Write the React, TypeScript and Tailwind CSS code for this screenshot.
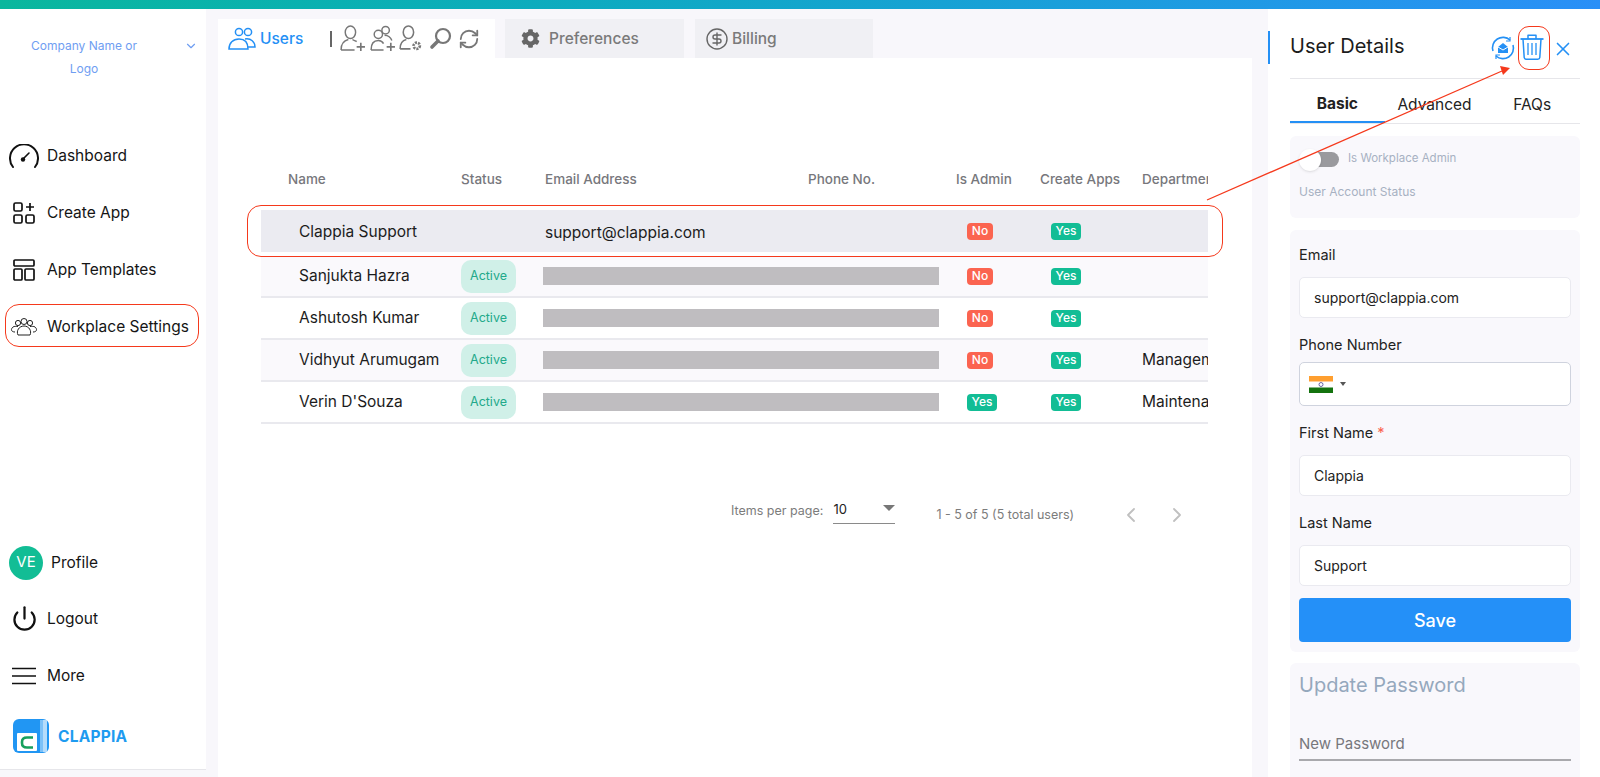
import React from 'react';
import { ChevronDown, ChevronLeft, ChevronRight, Power, RefreshCw, X, CircleDollarSign } from 'lucide-react';
import { FaCog } from 'react-icons/fa';

interface UserRow {
    name: string;
    active: boolean;
    email?: string;
    admin: boolean;
    department?: string;
    tinted?: boolean;
    selected?: boolean;
}

const users: UserRow[] = [
    { name: 'Clappia Support', active: false, email: 'support@clappia.com', admin: false, selected: true },
    { name: 'Sanjukta Hazra', active: true, admin: false, tinted: true },
    { name: 'Ashutosh Kumar', active: true, admin: false },
    { name: 'Vidhyut Arumugam', active: true, admin: false, department: 'Management', tinted: true },
    { name: "Verin D'Souza", active: true, admin: true, department: 'Maintenance' },
];

const GaugeIcon = () => (
    <svg width="30" height="24" viewBox="0 0 30 24" fill="none" stroke="#111" strokeWidth="2" strokeLinecap="round">
        <path d="M4 23 A14 14 0 1 1 26 23" />
        <path d="M14 15 L20 9" strokeWidth="1.6" />
        <circle cx="14" cy="15.5" r="2.2" fill="#111" stroke="none" />
    </svg>
);

const CreateAppIcon = () => (
    <svg width="22" height="22" viewBox="0 0 22 22" fill="none" stroke="#111" strokeWidth="1.7">
        <rect x="1" y="1" width="8" height="8" rx="1.5" />
        <rect x="1" y="13" width="8" height="8" rx="1.5" />
        <rect x="13" y="13" width="8" height="8" rx="1.5" />
        <path d="M17 1v8M13 5h8" />
    </svg>
);

const TemplateIcon = () => (
    <svg width="22" height="22" viewBox="0 0 22 22" fill="none" stroke="#111" strokeWidth="1.7">
        <rect x="1" y="1" width="20" height="6" rx="1" />
        <rect x="1" y="10" width="8" height="11" rx="1" />
        <rect x="12" y="10" width="9" height="11" rx="1" />
    </svg>
);

const GroupIcon = () => (
    <svg width="28" height="20" viewBox="0 0 28 20" fill="none" stroke="#222" strokeWidth="1">
        <circle cx="8" cy="6" r="2.6" />
        <circle cx="14" cy="4.5" r="3" />
        <circle cx="20" cy="6" r="2.6" />
        <path d="M5 15 C1 15 0.5 12 3 10 C4.5 9 6 9.5 8 9.5" />
        <path d="M23 15 C27 15 27.5 12 25 10 C23.5 9 22 9.5 20 9.5" />
        <path d="M8 18 C6 14 9 9 14 9 C19 9 22 14 20 18 Z" />
    </svg>
);

const MenuLines = () => (
    <svg width="26" height="18" viewBox="0 0 26 18" stroke="#111" strokeWidth="1.6">
        <path d="M1 1.5h24M1 9h24M1 16.5h24" />
    </svg>
);

const UsersTabIcon = () => (
    <svg width="28" height="24" viewBox="0 0 28 24" fill="none" stroke="#2490f5" strokeWidth="1.5">
        <circle cx="11" cy="5" r="3.6" />
        <circle cx="20" cy="5" r="3.6" />
        <path d="M1 22 C1 16 5 12 11 12 C17 12 20 16 20 22 Z" fill="#fff" />
        <path d="M17 12 C23 11 27 15 27 20 L20 20" />
    </svg>
);

const UserPlus = ({ double }: { double?: boolean }) => (
    <svg width="27" height="27" viewBox="0 0 26 26" fill="none" stroke="#777" strokeWidth="1.4">
        {double ? (
            <>
                <circle cx="16" cy="5" r="3.6" />
                <circle cx="9" cy="9" r="4" />
                <path d="M2 24 C2 18 5 15 9 15 C11 15 13 16 14 18 M2 24 H14" />
                <path d="M15 10 C18 10 21 12 22 15" />
            </>
        ) : (
            <>
                <ellipse cx="11" cy="7" rx="5" ry="6" />
                <path d="M2 24 C2 18 5 15 9 14 M13 14 C14 15 16 15 17 16 M2 24 H15" />
            </>
        )}
        <path d="M21 17v8M17 21h8" strokeWidth="1.6" />
    </svg>
);

const UserGear = () => (
    <svg width="25" height="27" viewBox="0 0 24 26" fill="none" stroke="#777" strokeWidth="1.5">
        <ellipse cx="10" cy="7" rx="5" ry="6" />
        <path d="M2 23 C2 18 4 15 8 14 M2 23 H12" />
        <circle cx="18" cy="20" r="3" strokeWidth="2.6" strokeDasharray="2 1" />
    </svg>
);

const Magnifier = () => (
    <svg width="23" height="23" viewBox="0 0 23 23" fill="none" stroke="#777">
        <circle cx="14" cy="9" r="7" strokeWidth="2.2" />
        <path d="M9 14 L3 20" strokeWidth="3.6" strokeLinecap="round" />
    </svg>
);

const MailSync = () => (
    <svg width="24" height="24" viewBox="0 0 24 24" fill="none" stroke="#2490f5" strokeWidth="1.6">
        <path d="M2 15 A10.5 10.5 0 0 1 19 4" />
        <path d="M22 9 A10.5 10.5 0 0 1 5 20" />
        <path d="M19 1v4h-4M5 23v-4h4" strokeWidth="1.2" />
        <path d="M7 11 L12 7 L17 11 V17 H7 Z" fill="#2490f5" stroke="none" />
        <path d="M7 11 L12 14 L17 11" stroke="#fff" strokeWidth="1" />
    </svg>
);

const TrashIcon = () => (
    <svg width="24" height="26" viewBox="0 0 24 26" fill="none" stroke="#2490f5" strokeWidth="1.5" strokeLinejoin="round">
        <path d="M0.5 5h23" strokeWidth="1.8" />
        <path d="M8 5V1.2h8V5" />
        <path d="M3 5l1.2 18.5q0.2 1.7 2 1.7h11.6q1.8 0 2-1.7L21 5" />
        <path d="M8 9v12M12 9v12M16 9v12" strokeWidth="1.3" />
    </svg>
);

const ClappiaLogo = () => (
    <svg width="36" height="35" viewBox="0 0 36 35">
        <rect x="0" y="0" width="36" height="34" rx="6" fill="#2196f3" />
        <rect x="27" y="1" width="3" height="32" fill="#7cc1f8" />
        <rect x="30" y="1" width="4" height="32" fill="#b5dcfb" />
        <rect x="4" y="14" width="20" height="18" rx="1" fill="#fff" />
        <path d="M20 18.5h-6q-5 0-5 4.5v1q0 4.5 5 4.5h6" fill="none" stroke="#17a05d" strokeWidth="2.6" />
    </svg>
);

const IndiaFlag = () => (
    <svg width="24" height="17" viewBox="0 0 24 17">
        <rect width="24" height="6" fill="#ff9f2f" />
        <rect y="5.5" width="24" height="6" fill="#fff" />
        <rect y="11.5" width="24" height="5.5" fill="#14730f" />
        <circle cx="12" cy="8.5" r="2" fill="none" stroke="#5a5a9a" strokeWidth="0.9" />
    </svg>
);

const NavItem = ({ icon, label }: { icon: React.ReactNode; label: string }) => (
    <div className="flex h-[57px] items-center">
        <div className="flex w-[46px] justify-center">{icon}</div>
        <span className="text-[15.5px] text-[#151515]">{label}</span>
    </div>
);

const Badge = ({ yes }: { yes: boolean }) => (
    <span className={`flex h-[17px] items-center justify-center rounded-[4px] text-[12px] font-medium text-white ${yes ? 'w-[30px] bg-[#12bd95]' : 'w-[26px] bg-[#fb6450]'}`}>
        {yes ? 'Yes' : 'No'}
    </span>
);

const Row = ({ user }: { user: UserRow }) => {
    const bg = user.selected ? 'bg-[#ebebf1]' : user.tinted ? 'bg-[#faf9fc]' : 'bg-white';
    return (
        <div className={`flex items-center ${bg} ${user.selected ? 'mb-[4px] h-[42px]' : 'h-[42px] border-b-2 border-[#e9e9ee]'}`}>
            <div className={`w-[200px] pl-[38px] text-[15.5px] text-[#1c1c1c] ${user.selected ? 'pt-[2px]' : ''}`}>{user.name}</div>
            <div className="w-[84px]">
                {user.active && (
                    <span className="flex h-[33px] w-[55px] items-center justify-center rounded-[10px] bg-[#d0f0e8] text-[12.5px] text-[#22a98a]">
                        Active
                    </span>
                )}
            </div>
            <div className={`w-[422px] ${user.selected ? 'pt-[2px]' : ''}`}>
                {user.email ? (
                    <span className="text-[15.5px] text-[#1c1c1c]">{user.email}</span>
                ) : (
                    <div className="-ml-[2px] h-[18px] w-[396px] bg-[#bfbdc0]" />
                )}
            </div>
            <div className="w-[84px]">
                <Badge yes={user.admin} />
            </div>
            <div className="w-[91px]">
                <Badge yes />
            </div>
            <div className="flex-1 overflow-hidden whitespace-nowrap text-[15.5px] text-[#1c1c1c]">{user.department}</div>
        </div>
    );
};

const Field = ({ label, value, required }: { label: string; value: string; required?: boolean }) => (
    <div className="mb-[18px]">
        <div className="mb-[13px] h-[18px] text-[14.5px] leading-[18px] text-[#222]">
            {label}
            {required && <span className="ml-1 text-[#fb6450]">*</span>}
        </div>
        <div className="flex h-[41px] items-center rounded-[5px] border border-[#eaeaf0] bg-white px-[14px] text-[14px] text-[#222]">
            {value}
        </div>
    </div>
);

export default function App() {
    return (
        <div className="relative h-[777px] w-[1600px] overflow-hidden bg-[#f8f7fb] font-['Inter',sans-serif]">
            <div className="h-[9px] bg-gradient-to-r from-[#0bb79d] to-[#2a8ff7]" />
            <div className="flex h-[768px]">
                {/* sidebar */}
                <aside className="flex h-[761px] w-[206px] flex-col border-b border-[#e6e6ea] bg-white pl-[1px]">
                    <div className="flex h-[118px] pt-[25px]">
                        <div className="w-[166px] text-center text-[12px] leading-[23px] text-[#6f9ef2]">
                            Company Name or
                            <br />
                            Logo
                        </div>
                        <ChevronDown size={14} className="mt-[5px] ml-[17px] text-[#6f9ef2]" />
                    </div>
                    <NavItem icon={<GaugeIcon />} label="Dashboard" />
                    <NavItem icon={<CreateAppIcon />} label="Create App" />
                    <NavItem icon={<TemplateIcon />} label="App Templates" />
                    <NavItem icon={<GroupIcon />} label="Workplace Settings" />
                    <div className="flex-1" />
                    <div className="flex h-[57px] items-center pt-[2px]">
                        <div className="ml-[8px] flex h-[34px] w-[34px] items-center justify-center rounded-full bg-[#12bd95] text-[15px] text-white">VE</div>
                        <span className="ml-[8px] text-[15.5px] text-[#151515]">Profile</span>
                    </div>
                    <NavItem icon={<Power size={27} strokeWidth={2} className="text-[#111]" />} label="Logout" />
                    <NavItem icon={<MenuLines />} label="More" />
                    <div className="flex h-[65px] items-center pl-[12px]">
                        <ClappiaLogo />
                        <span className="ml-[9px] text-[15.5px] font-bold tracking-[0.2px] text-[#1e9bf0]">CLAPPIA</span>
                    </div>
                </aside>

                {/* main column */}
                <main className="ml-[12px] flex w-[1034px] flex-col pt-[10px]">
                    <div className="flex h-[39px] items-end">
                        <div className="flex h-[39px] w-[277px] items-center bg-white pl-[10px]">
                            <UsersTabIcon />
                            <span className="ml-[4px] text-[15.5px] font-medium text-[#2490f5]">Users</span>
                            <span className="ml-[27px] mr-[7px] h-[16px] w-[2px] bg-[#666]" />
                            <UserPlus />
                            <span className="ml-[3px]"><UserPlus double /></span>
                            <span className="ml-[2px]"><UserGear /></span>
                            <span className="ml-[6px]"><Magnifier /></span>
                            <RefreshCw size={22} className="ml-[6px] text-[#777]" />
                        </div>
                        <div className="ml-[10px] flex h-[39px] w-[179px] items-center bg-[#f0f0f4] pl-[16px]">
                            <FaCog size={19} className="text-[#666]" />
                            <span className="ml-[9px] text-[15.5px] font-medium text-[#7a7a7a]">Preferences</span>
                        </div>
                        <div className="ml-[11px] flex h-[39px] w-[178px] items-center bg-[#f0f0f4] pl-[10px]">
                            <CircleDollarSign size={24} strokeWidth={1.4} className="text-[#666]" />
                            <span className="ml-[3px] text-[15.5px] font-medium text-[#7a7a7a]">Billing</span>
                        </div>
                    </div>
                    <div className="flex-1 bg-white pl-[43px] pr-[44px] pt-[110px]">
                        <div className="flex h-[42px] items-start pt-[1px] text-[13.5px] font-medium text-[#77777c] whitespace-nowrap">
                            <div className="w-[200px] pl-[27px]">Name</div>
                            <div className="w-[84px]">Status</div>
                            <div className="w-[263px]">Email Address</div>
                            <div className="w-[148px]">Phone No.</div>
                            <div className="w-[84px]">Is Admin</div>
                            <div className="w-[102px]">Create Apps</div>
                            <div className="flex-1 overflow-hidden">Department</div>
                        </div>
                        {users.map((user) => (
                            <Row key={user.name} user={user} />
                        ))}
                        <div className="mt-[47px] flex h-[88px] items-center pl-[470px] text-[12.5px] text-[#7c7c7c]">
                            <span className="mb-[8px]">Items per page:</span>
                            <div className="mb-[7px] ml-[10px] flex h-[24px] w-[62px] items-start justify-between border-b border-[#8a8a8a] text-[13px] leading-[18px] text-[#222]">
                                10
                                <span className="mt-[5px] h-0 w-0 border-x-[6px] border-t-[6px] border-x-transparent border-t-[#777]" />
                            </div>
                            <span className="ml-[41px]">1 - 5 of 5 (5 total users)</span>
                            <ChevronLeft size={24} strokeWidth={1.8} className="ml-[45px] text-[#c0c0c0]" />
                            <ChevronRight size={24} strokeWidth={1.8} className="ml-[22px] text-[#c0c0c0]" />
                        </div>
                    </div>
                </main>

                {/* user details panel */}
                <section className="relative ml-[16px] flex-1 overflow-hidden bg-white pl-[22px] pr-[20px]">
                    <div className="absolute left-0 top-[22px] h-[33px] w-[2px] bg-[#2490f5]" />
                    <div className="flex h-[70px] items-start border-b border-[#e6e6ea] pt-[21px]">
                        <span className="text-[20px] leading-[32px] text-[#1c1c1c]">User Details</span>
                        <span className="ml-[87px] mt-[6px]"><MailSync /></span>
                        <span className="ml-[5px] mt-[4px]"><TrashIcon /></span>
                        <X size={22} strokeWidth={1.8} className="ml-[8px] mt-[8px] text-[#2490f5]" />
                    </div>
                    <div className="flex h-[45px] border-b border-[#e6e6ea] text-[15.5px] text-[#222]">
                        <div className="flex w-[95px] items-center justify-center border-b-2 border-[#2490f5] pt-[7px] font-bold">Basic</div>
                        <div className="flex w-[100px] items-center justify-center pt-[7px]">Advanced</div>
                        <div className="flex w-[96px] items-center justify-center pt-[7px]">FAQs</div>
                    </div>
                    <div className="mt-[12px] h-[82px] rounded-[6px] bg-[#f9f8fc] pl-[9px] pt-[14px]">
                        <div className="flex h-[18px] items-center">
                            <div className="relative ml-[5px] h-[15px] w-[35px] rounded-full bg-[#9a9a9e]">
                                <div className="absolute -top-[3px] -left-[5px] h-[22px] w-[22px] rounded-full bg-white shadow-sm" />
                            </div>
                            <span className="ml-[9px] text-[11.5px] text-[#a7b1c2]">Is Workplace Admin</span>
                        </div>
                        <div className="mt-[15px] text-[12px] text-[#a7b1c2]">User Account Status</div>
                    </div>
                    <div className="mt-[12px] h-[422px] rounded-[6px] bg-[#f9f8fc] px-[9px] pt-[16px]">
                        <Field label="Email" value="support@clappia.com" />
                        <div className="mb-[18px]">
                            <div className="mb-[8px] h-[18px] text-[14.5px] leading-[18px] text-[#222]">Phone Number</div>
                            <div className="flex h-[44px] items-center rounded-[5px] border border-[#cfd3de] bg-white pl-[9px]">
                                <IndiaFlag />
                                <span className="ml-[7px] h-0 w-0 border-x-[3px] border-t-[4px] border-x-transparent border-t-[#555]" />
                            </div>
                        </div>
                        <Field label="First Name" value="Clappia" required />
                        <Field label="Last Name" value="Support" />
                        <button className="-mt-[6px] h-[44px] w-full rounded-[4px] bg-[#2490f8] text-[18px] font-medium text-white">Save</button>
                    </div>
                    <div className="mt-[11px] h-[120px] rounded-[6px] bg-[#f9f8fc] pt-[8px]">
                        <div className="pl-[9px] text-[20px] leading-[28px] text-[#95a8bd]">Update Password</div>
                        <div className="mx-[9px] mt-[34px] border-b-2 border-[#a9a9ad] pb-[3px] text-[15px] text-[#77777c]">New Password</div>
                    </div>
                </section>
            </div>

            {/* red annotations drawn over the screenshot */}
            <div className="absolute left-[5px] top-[304px] h-[43px] w-[194px] rounded-[14px] border border-[#f5391c]" />
            <div className="absolute left-[247px] top-[205px] h-[52px] w-[976px] rounded-[14px] border border-[#f5391c]" />
            <div className="absolute left-[1518px] top-[26px] h-[44px] w-[32px] rounded-[11px] border border-[#f5391c]" />
            <svg className="absolute left-0 top-0" width="1600" height="777" fill="none">
                <path d="M1207 200 L1502 71" stroke="#f5391c" strokeWidth="1.3" />
                <path d="M1510 68 L1500 66 L1503 75 Z" fill="#f5391c" />
            </svg>
        </div>
    );
}
